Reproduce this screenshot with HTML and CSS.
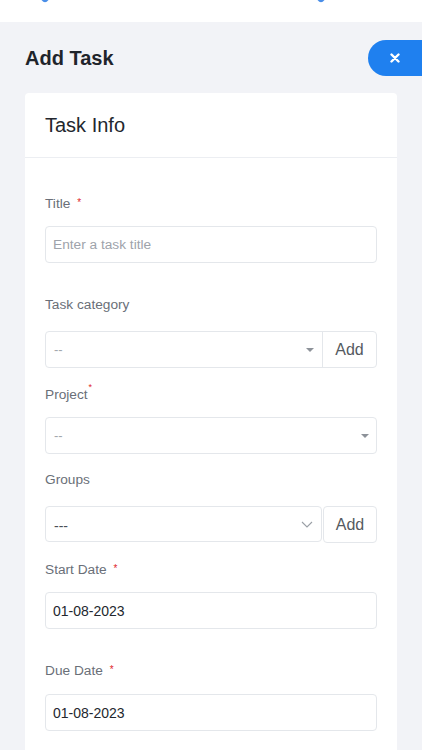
FILE: index.html
```html
<!DOCTYPE html>
<html>
<head>
<meta charset="utf-8">
<link rel="stylesheet" href="styles.css">
</head>
<body>
<div class="topbar">
  <svg class="top-icon top-icon-left" width="8" height="4" viewBox="0 0 8 4"><path d="M0.5 0 Q4 4.5 7.5 0 Z" fill="#4a8ee8"/></svg>
  <svg class="top-icon top-icon-right" width="8" height="4" viewBox="0 0 8 4"><path d="M0.5 0 Q4 4.5 7.5 0 Z" fill="#4a8ee8"/></svg>
</div>
<main class="page">
  <div class="page-head">
    <h1 class="page-title">Add Task</h1>
    <button class="close-btn" type="button">
      <svg width="10" height="10" viewBox="0 0 10 10"><path d="M1.5 1.5 L8.5 8.5 M8.5 1.5 L1.5 8.5" stroke="#fff" stroke-width="2.4" stroke-linecap="round"/></svg>
    </button>
  </div>
  <section class="card">
    <div class="card-head">Task Info</div>
    <div class="card-body">
      <div class="field field-lg">
        <div class="label label-sm">Title <span class="req">*</span></div>
        <div class="input"><span class="placeholder">Enter a task title</span></div>
      </div>
      <div class="field">
        <div class="label">Task category</div>
        <div class="combo">
          <div class="combo-select"><span class="muted">--</span><span class="caret"></span></div>
          <div class="combo-add">Add</div>
        </div>
      </div>
      <div class="field field-md">
        <div class="label label-sm">Project<span class="req sup">*</span></div>
        <div class="input select"><span class="muted">--</span><span class="caret"></span></div>
      </div>
      <div class="field">
        <div class="label">Groups</div>
        <div class="split">
          <div class="input split-select"><span class="dark">---</span>
            <svg class="chev" width="12" height="7" viewBox="0 0 12 7"><path d="M1 1 L6 6 L11 1" fill="none" stroke="#9a9fa6" stroke-width="1.1"/></svg>
          </div>
          <div class="split-add">Add</div>
        </div>
      </div>
      <div class="field field-lg">
        <div class="label label-sm">Start Date <span class="req">*</span></div>
        <div class="input"><span class="value">01-08-2023</span></div>
      </div>
      <div class="field">
        <div class="label label-13">Due Date <span class="req">*</span></div>
        <div class="input"><span class="value">01-08-2023</span></div>
      </div>
    </div>
  </section>
</main>
</body>
</html>
```
FILE: styles.css
```css
* { box-sizing: border-box; }
html, body { margin: 0; padding: 0; }
body {
  background: #f2f3f7;
  font-family: "Liberation Sans", Arial, sans-serif;
  color: #23272e;
  width: 422px;
  height: 750px;
  overflow: hidden;
}
.topbar {
  height: 22px;
  background: #fff;
  position: relative;
}
.top-icon { position: absolute; top: 0; }
.top-icon-left { left: 41px; }
.top-icon-right { left: 317px; }
.page { padding-top: 18px; }
.page-head {
  display: flex;
  justify-content: space-between;
  align-items: center;
  height: 36px;
  padding-left: 25px;
}
.page-title {
  margin: 0;
  font-size: 20px;
  font-weight: 700;
  color: #1f242b;
}
.close-btn {
  width: 54px;
  height: 36px;
  border: 0;
  padding: 0;
  background: #1f80ef;
  border-radius: 18px 0 0 18px;
  display: flex;
  align-items: center;
  justify-content: center;
}
.card {
  margin: 17px 25px 0;
  background: #fff;
  border-radius: 4px;
}
.card-head {
  height: 65px;
  padding-left: 20px;
  display: flex;
  align-items: center;
  font-size: 20px;
  color: #23272e;
  border-bottom: 1px solid #eceef2;
}
.card-body { padding: 36px 20px 20px; }
.field { margin-bottom: 17px; }
.field-lg { margin-bottom: 32px; }
.field-md { margin-bottom: 16px; }
.label {
  font-size: 13.7px;
  line-height: 20px;
  height: 20px;
  color: #6a6f78;
  margin-bottom: 16px;
}
.label-sm { margin-bottom: 12px; }
.label-13 { margin-bottom: 13px; }
.req {
  color: #e0262b;
  font-size: 10px;
  line-height: 0;
  margin-left: 3px;
  vertical-align: 2px;
}
.req.sup { margin-left: 1px; vertical-align: 9px; font-size: 9px; }
.input {
  height: 37px;
  border: 1px solid #e4e7eb;
  border-radius: 4px;
  display: flex;
  align-items: center;
  padding: 0 7px;
  font-size: 14px;
}
.placeholder { color: #9ea3ab; font-size: 13.7px; }
.value { color: #23272e; }
.muted { color: #a2a7ad; font-size: 13px; padding-left: 1px; }
.dark { color: #4a4f56; font-size: 14px; padding-left: 1px; margin-top: 4px; }
.select { justify-content: space-between; padding-right: 7px; }
.caret {
  width: 0;
  height: 0;
  border-left: 4px solid transparent;
  border-right: 4px solid transparent;
  border-top: 4px solid #8d9299;
}
.combo {
  display: flex;
  height: 37px;
  border: 1px solid #e4e7eb;
  border-radius: 4px;
}
.combo-select {
  flex: 1;
  display: flex;
  align-items: center;
  justify-content: space-between;
  padding: 0 8px 0 7px;
  border-right: 1px solid #e4e7eb;
}
.combo-add, .split-add {
  width: 53px;
  display: flex;
  align-items: center;
  justify-content: center;
  font-size: 16px;
  color: #555a61;
}
.split { display: flex; gap: 1px; }
.split-select {
  flex: 1;
  height: 36px;
  justify-content: space-between;
  padding-right: 8px;
}
.split-add {
  width: 54px;
  height: 37px;
  border: 1px solid #e4e7eb;
  border-radius: 4px;
}
```
